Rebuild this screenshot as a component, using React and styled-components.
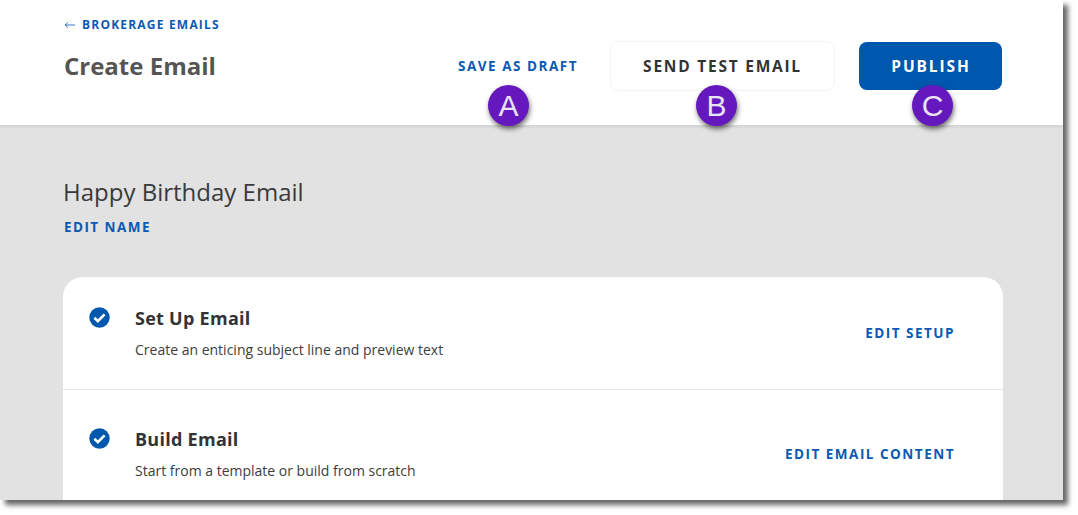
import React from 'react';
import styled, { createGlobalStyle } from 'styled-components';

const GlobalStyle = createGlobalStyle`
  html, body { margin: 0; padding: 0; background: #fff; }
  body { font-family: 'Open Sans', 'Liberation Sans', sans-serif; overflow: hidden; }
`;

const Stage = styled.div`
  width: 1078px;
  height: 515px;
  background: #fff;
  overflow: hidden;
`;

const Frame = styled.div`
  position: relative;
  width: 1063px;
  height: 500px;
  background: #e2e2e2;
  overflow: hidden;
  box-shadow: 5px 5px 5px rgba(0, 0, 0, 0.6);
`;

const Shell = styled.div`
  width: 1063px;
  height: 500px;
  overflow: hidden;
`;

const Header = styled.header`
  box-sizing: border-box;
  height: 126px;
  background: #fff;
  border-bottom: 1px solid #d6d6d6;
  box-shadow: 0 1px 2px rgba(0, 0, 0, 0.08);
  padding: 17px 61px 0 64px;
  display: flex;
  justify-content: space-between;
`;

const TitleBlock = styled.div`
  display: flex;
  flex-direction: column;
`;

const LinkText = styled.a`
  font-size: 12px;
  line-height: 16px;
  font-weight: 700;
  letter-spacing: 1.5px;
  color: #0a5ab4;
  text-transform: uppercase;
  white-space: nowrap;
`;

const BackLink = styled(LinkText)`
  display: flex;
  align-items: center;
  gap: 7px;
  font-size: 12px;
  letter-spacing: 1.2px;
`;

const PageTitle = styled.h1`
  margin: 17px 0 0;
  font-size: 24px;
  line-height: 32px;
  font-weight: 700;
  color: #555;
`;

const Actions = styled.div`
  display: flex;
  align-items: center;
  height: 50px;
  margin-top: 24px;
`;

const DraftLink = styled(LinkText)`
  font-size: 13.5px;
  line-height: 18px;
  letter-spacing: 1.52px;
  margin-right: 32px;
`;

const TestButton = styled.button`
  box-sizing: border-box;
  width: 225px;
  height: 50px;
  margin-right: 24px;
  padding: 0;
  background: #fff;
  border: 1px solid #f4f4f4;
  border-radius: 8px;
  font: 700 15.5px 'Open Sans', sans-serif;
  letter-spacing: 1.76px;
  color: #333;
`;

const PublishButton = styled.button`
  box-sizing: border-box;
  width: 143px;
  height: 48px;
  padding: 0 0 0 1px;
  background: #0057ae;
  border: 0;
  border-radius: 8px;
  font: 700 15.5px 'Open Sans', sans-serif;
  letter-spacing: 1.9px;
  color: #fff;
`;

const Badge = styled.span`
  position: absolute;
  top: ${(p) => p.$top}px;
  left: ${(p) => p.$left}px;
  width: 41px;
  height: 41px;
  border-radius: 50%;
  background: #6518bd;
  box-shadow: 1px 3px 5px rgba(0, 0, 0, 0.55);
  color: #e8e2f2;
  font: 400 30px/41px 'Liberation Sans', Arial, sans-serif;
  text-align: center;
`;

const Main = styled.main`
  padding: 49px 60px 0 63px;
`;

const EmailName = styled.h2`
  margin: 0;
  font-size: 24px;
  line-height: 34px;
  font-weight: 400;
  color: #3a3a3a;
`;

const EditName = styled(LinkText)`
  display: block;
  margin: 9px 0 0 1px;
  font-size: 13.5px;
  line-height: 18px;
  letter-spacing: 1.45px;
`;

const Card = styled.section`
  margin-top: 41px;
  background: #fff;
  border-radius: 20px;
  overflow: hidden;
`;

const Row = styled.div`
  box-sizing: border-box;
  height: ${(p) => p.$height}px;
  display: grid;
  grid-template-columns: 46px 1fr auto;
  padding: ${(p) => p.$top}px 48px 0 26px;
  & + & {
    border-top: 1px solid #e4e4e4;
  }
`;

const CheckWrap = styled.div`
  width: 21px;
  height: 21px;
  margin-top: 1px;
`;

const StepTitle = styled.h3`
  margin: 0;
  font-size: 18px;
  line-height: 24px;
  font-weight: 700;
  letter-spacing: 0.27px;
  color: #333;
`;

const StepText = styled.p`
  margin: 10px 0 0;
  font-size: 14px;
  line-height: 20px;
  color: #3d3d3d;
`;

const RowLink = styled(LinkText)`
  align-self: start;
  margin-top: 17px;
  font-size: 13.5px;
  line-height: 20px;
  letter-spacing: 1.5px;
`;

const Check = () => (
  <svg width="21" height="21" viewBox="0 0 21 21">
    <circle cx="10.5" cy="10.5" r="10.2" fill="#0057ae" />
    <path d="M5.4 10.8l3.4 3.3 6.8-6.8" fill="none" stroke="#fff" strokeWidth="2.6" />
  </svg>
);

const Arrow = () => (
  <svg width="11" height="8" viewBox="0 0 11 8">
    <path d="M11 4H1M4 1.2L1.2 4 4 6.8" fill="none" stroke="#0a5ab4" strokeWidth="0.8" />
  </svg>
);

const steps = [
  { title: 'Set Up Email', text: 'Create an enticing subject line and preview text', link: 'Edit Setup', height: 112, top: 29 },
  { title: 'Build Email', text: 'Start from a template or build from scratch', link: 'Edit Email Content', height: 140, top: 37 },
];

export default function App() {
  return (
    <Stage>
      <GlobalStyle />
      <Frame>
        <Shell>
          <Header>
            <TitleBlock>
              <BackLink><Arrow />Brokerage Emails</BackLink>
              <PageTitle>Create Email</PageTitle>
            </TitleBlock>
            <Actions>
              <DraftLink>Save as Draft</DraftLink>
              <TestButton>SEND TEST EMAIL</TestButton>
              <PublishButton>PUBLISH</PublishButton>
            </Actions>
          </Header>
          <Main>
            <EmailName>Happy Birthday Email</EmailName>
            <EditName>Edit Name</EditName>
            <Card>
              {steps.map((s) => (
                <Row key={s.title} $height={s.height} $top={s.top}>
                  <CheckWrap><Check /></CheckWrap>
                  <div>
                    <StepTitle>{s.title}</StepTitle>
                    <StepText>{s.text}</StepText>
                  </div>
                  <RowLink>{s.link}</RowLink>
                </Row>
              ))}
            </Card>
          </Main>
        </Shell>
        <Badge $left={488} $top={85}>A</Badge>
        <Badge $left={696} $top={85}>B</Badge>
        <Badge $left={912} $top={85}>C</Badge>
      </Frame>
    </Stage>
  );
}
